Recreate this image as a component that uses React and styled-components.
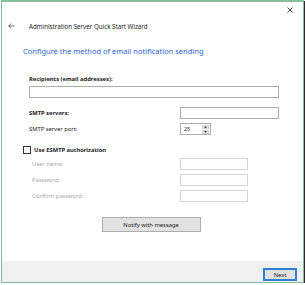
import styled, { createGlobalStyle } from "styled-components";

const Global = createGlobalStyle`
  html, body {
    margin: 0;
    background: #ffffff;
  }
  body {
    font-family: "Noto Sans", "Liberation Sans", sans-serif;
    color: #1b1b1b;
  }
`;

const Frame = styled.div`
  box-sizing: border-box;
  width: 303px;
  height: 283px;
  margin: 0 0 0 1px;
  border: 1px solid #86bd9c;
  border-top-width: 2px;
  box-shadow: 1px 1px 0 #2b2b2b;
  display: flex;
  flex-direction: column;
  background: #fff;
`;

const CloseRow = styled.div`
  height: 15px;
  display: flex;
  justify-content: flex-end;
  align-items: center;
  padding-right: 10px;
`;

const Header = styled.div`
  height: 18px;
  display: flex;
  align-items: center;
  gap: 14px;
  padding-left: 6px;
`;

const HeaderTitle = styled.div`
  font-size: 6.2px;
  color: #222;
`;

const Content = styled.div`
  flex: 1;
  padding-left: 27px;
  padding-right: 24px;
  display: flex;
  flex-direction: column;
`;

const Heading = styled.div`
  margin: 9px 0 0 -6px;
  height: 14px;
  line-height: 14px;
  font-size: 7.5px;
  color: #2b63cf;
`;

const Label = styled.div`
  font-size: 5.8px;
  font-weight: ${p => (p.$bold ? 700 : 400)};
  color: ${p => (p.$disabled ? "#a8a8a8" : "#222")};
  padding-left: ${p => (p.$disabled ? "3px" : "0")};
  line-height: 10px;
`;

const Field = styled.div`
  box-sizing: border-box;
  width: ${p => p.$w}px;
  height: ${p => p.$h || 12}px;
  border: 1px solid ${p => (p.$disabled ? "#d7d7d7" : "#abadb3")};
  background: #fff;
  display: flex;
  align-items: center;
  font-size: 5.4px;
  padding-left: 3px;
  position: relative;
`;

const Recipients = styled.div`
  margin-top: 16px;
  display: flex;
  flex-direction: column;
  gap: 2px;
`;

const Rows = styled.div`
  margin-top: ${p => p.$top}px;
  display: flex;
  flex-direction: column;
  gap: 4px;
`;

const Row = styled.div`
  display: grid;
  grid-template-columns: 151px auto;
  align-items: center;
  height: 12px;
`;

const Spin = styled.div`
  position: absolute;
  right: 1px;
  top: 1px;
  bottom: 1px;
  width: 7px;
  display: flex;
  flex-direction: column;
  gap: 1px;
`;

const SpinBtn = styled.div`
  flex: 1;
  background: #e6e6e6;
  border: 1px solid #cfcfcf;
  box-sizing: border-box;
  display: flex;
  align-items: center;
  justify-content: center;
`;

const CheckRow = styled.div`
  margin: 10px 0 0 -6px;
  height: 10px;
  display: flex;
  align-items: center;
  gap: 3px;
`;

const Box = styled.div`
  box-sizing: border-box;
  width: 8px;
  height: 8px;
  border: 1px solid #333;
  background: #fff;
`;

const Button = styled.div`
  box-sizing: border-box;
  height: ${p => p.$h}px;
  width: ${p => p.$w}px;
  background: #e1e1e1;
  border: 1px solid ${p => (p.$primary ? "#2f7fd6" : "#adadad")};
  box-shadow: ${p => (p.$primary ? "inset 0 0 0 1px #2f7fd6" : "none")};
  display: flex;
  align-items: center;
  justify-content: center;
  font-size: 5.8px;
  color: #222;
`;

const Center = styled.div`
  margin-top: 15px;
  display: flex;
  justify-content: center;
  padding-right: 6px;
`;

const Footer = styled.div`
  height: 21px;
  background: #f0f0f0;
  display: flex;
  justify-content: flex-end;
  align-items: flex-start;
  padding: 7px 6px 0 0;
  box-sizing: border-box;
`;

function Arrow({ up }) {
  return (
    <svg width="3" height="2" viewBox="0 0 4 3">
      <path d={up ? "M0 3 L2 0 L4 3Z" : "M0 0 L2 3 L4 0Z"} fill="#333" />
    </svg>
  );
}

export default function App() {
  return (
    <>
      <Global />
      <Frame>
        <CloseRow>
          <svg width="6" height="6" viewBox="0 0 6 6">
            <path d="M0.5 0.5 L5.5 5.5 M5.5 0.5 L0.5 5.5" stroke="#333" strokeWidth="0.9" />
          </svg>
        </CloseRow>
        <Header>
          <svg width="7" height="6" viewBox="0 0 7 6">
            <path d="M6.5 3 H0.8 M3 0.6 L0.8 3 L3 5.4" stroke="#444" strokeWidth="0.8" fill="none" />
          </svg>
          <HeaderTitle>Administration Server Quick Start Wizard</HeaderTitle>
        </Header>
        <Content>
          <Heading>Configure the method of email notification sending</Heading>
          <Recipients>
            <Label $bold>Recipients (email addresses):</Label>
            <Field $w={250} />
          </Recipients>
          <Rows $top={9}>
            <Row>
              <Label $bold>SMTP servers:</Label>
              <Field $w={99} />
            </Row>
            <Row>
              <Label>SMTP server port:</Label>
              <Field $w={31}>
                25
                <Spin>
                  <SpinBtn><Arrow up /></SpinBtn>
                  <SpinBtn><Arrow /></SpinBtn>
                </Spin>
              </Field>
            </Row>
          </Rows>
          <CheckRow>
            <Box />
            <Label $bold>Use ESMTP authorization</Label>
          </CheckRow>
          <Rows $top={3}>
            <Row>
              <Label $disabled>User name:</Label>
              <Field $w={68} $disabled />
            </Row>
            <Row>
              <Label $disabled>Password:</Label>
              <Field $w={68} $disabled />
            </Row>
            <Row>
              <Label $disabled>Confirm password:</Label>
              <Field $w={68} $disabled />
            </Row>
          </Rows>
          <Center>
            <Button $w={99} $h={15}>Notify with message</Button>
          </Center>
        </Content>
        <Footer>
          <Button $primary $w={34} $h={13}>Next</Button>
        </Footer>
      </Frame>
    </>
  );
}
